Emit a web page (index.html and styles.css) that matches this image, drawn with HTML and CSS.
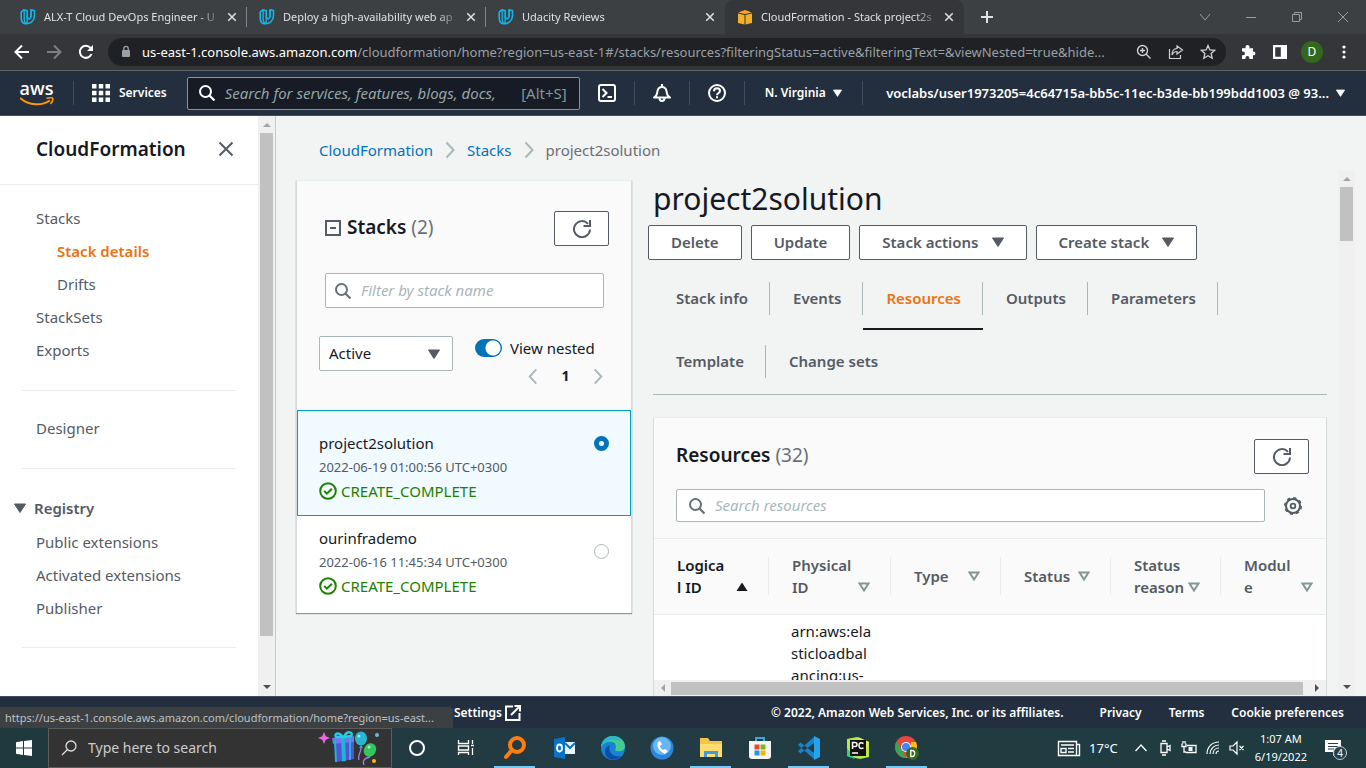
FILE: index.html
```html
<!DOCTYPE html>
<html lang="en">
<head>
<meta charset="utf-8">
<title>CloudFormation - Stack project2solution</title>
<link rel="stylesheet" href="styles.css">
</head>
<body>
<svg class="defs" aria-hidden="true">
  <symbol id="udacity" viewBox="0 0 16 16"><path d="M1.2 3.2v5.3c0 4 2 6.3 5 6.3 4.600 0 8.300-3.300 8.300-8.300V1.600l-3.500-.8v6.800c0 1.500-1.500 2.500-2.700 1.900-.9-.5-1.100-1.300-1.100-2.400V1.600L3.700.9 1.200 3.200z" fill="none" stroke="#12b5ea" stroke-width="1.600"/><path d="M7.200 7v5.500c0 1.500-1 2-2 2M11 1v7M4.200 1.500v8.500c0 2.500 1 4 2.500 4" fill="none" stroke="#12b5ea" stroke-width="1.300"/></symbol>
  <symbol id="cross" viewBox="0 0 16 16"><path d="M3 3l10 10M13 3L3 13" fill="none" stroke="currentColor" stroke-width="2"/></symbol>
  <symbol id="lens" viewBox="0 0 16 16"><circle cx="6.500" cy="6.500" r="5.500" fill="none" stroke="currentColor" stroke-width="2"/><path d="M10.500 10.500l5 5" stroke="currentColor" stroke-width="2.200"/></symbol>
  <symbol id="refresh" viewBox="0 0 18 18"><path d="M17 9.500A8 8 0 1 1 15 3.800" fill="none" stroke="currentColor" stroke-width="2"/><path d="M17 0v6h-6.500" fill="none" stroke="currentColor" stroke-width="2"/></symbol>
  <symbol id="down" viewBox="0 0 12 10"><path d="M.5 1h11L6 9.500z" fill="currentColor" stroke="currentColor" stroke-linejoin="round"/></symbol>
  <symbol id="up" viewBox="0 0 12 10"><path d="M.5 9h11L6 .5z" fill="currentColor"/></symbol>
  <symbol id="sort" viewBox="0 0 12 10"><path d="M1.500 1.500h9L6 8.500z" fill="none" stroke="#879596" stroke-width="2"/></symbol>
  <symbol id="ok" viewBox="0 0 18 18"><circle cx="9" cy="9" r="7.800" fill="none" stroke="currentColor" stroke-width="2"/><path d="M5.200 9l2.700 2.700 5-5" fill="none" stroke="currentColor" stroke-width="2"/></symbol>
  <symbol id="chev" viewBox="0 0 10 18"><path d="M1.500 1.500L8.500 9l-7 7.500" fill="none" stroke="currentColor" stroke-width="2"/></symbol>
  <symbol id="tri" viewBox="0 0 8 4"><path d="M0 4L4 0l4 4z" fill="currentColor"/></symbol>
</svg>

<header class="tabstrip">
  <div class="tab"><svg class="i16"><use href="#udacity"/></svg><span class="tab-title">ALX-T Cloud DevOps Engineer - U</span><button class="bare" aria-label="Close tab"><svg class="i12"><use href="#cross"/></svg></button></div>
  <div class="tab"><svg class="i16"><use href="#udacity"/></svg><span class="tab-title">Deploy a high-availability web ap</span><button class="bare" aria-label="Close tab"><svg class="i12"><use href="#cross"/></svg></button></div>
  <div class="tab last"><svg class="i16"><use href="#udacity"/></svg><span class="tab-title">Udacity Reviews</span><button class="bare" aria-label="Close tab"><svg class="i12"><use href="#cross"/></svg></button></div>
  <div class="tab active"><svg class="i16" viewBox="0 0 16 16"><path d="M1 4.500L7.500 6v9.500L1 14zM15 4.500L8.500 6v9.500L15 14zM1.200 3.500L8 1l6.800 2.500L8 5z" fill="#f5b02a"/><path d="M4 3l4-1.500L12 3 8 4z" fill="#ff9d0a"/></svg><span class="tab-title">CloudFormation - Stack project2s</span><button class="bare" aria-label="Close tab"><svg class="i12"><use href="#cross"/></svg></button></div>
  <button class="bare newtab" aria-label="New tab"><svg class="i12" viewBox="0 0 12 12"><path d="M6 0v12M0 6h12" stroke="currentColor" stroke-width="2"/></svg></button>
  <div class="win">
    <button class="bare" aria-label="Search tabs"><svg class="i12" viewBox="0 0 12 12"><path d="M1 3l5 6 5-6" fill="none" stroke="currentColor"/></svg></button>
    <button class="bare" aria-label="Minimize"><svg class="i12" viewBox="0 0 12 12"><path d="M1 6.500h10" stroke="currentColor"/></svg></button>
    <button class="bare" aria-label="Restore"><svg class="i12" viewBox="0 0 12 12"><path d="M1.500 3.500h7v7h-7zM3.500 3.500v-2h7v7h-2" fill="none" stroke="currentColor"/></svg></button>
    <button class="bare" aria-label="Close"><svg class="i12" viewBox="0 0 12 12"><path d="M1 1l10 10M11 1L1 11" stroke="currentColor"/></svg></button>
  </div>
</header>

<div class="toolbar">
  <button class="bare tool" aria-label="Back"><svg class="i16" viewBox="0 0 16 16"><path d="M15 8H2M8 1.500L1.500 8 8 14.500" fill="none" stroke="#fff" stroke-width="2"/></svg></button>
  <button class="bare tool" aria-label="Forward"><svg class="i16" viewBox="0 0 16 16"><path d="M1 8h13M8 1.500L14.500 8 8 14.500" fill="none" stroke="#7d7f82" stroke-width="2"/></svg></button>
  <button class="bare tool" aria-label="Reload"><svg class="i16" viewBox="0 0 16 16"><path d="M13.500 10A6 6 0 1 1 12.500 4" fill="none" stroke="#fff" stroke-width="2"/><path d="M15 1v6H9z" fill="#fff"/></svg></button>
  <div class="omnibox">
    <svg class="lock" viewBox="0 0 10 14"><rect x="1" y="5" width="8" height="7" rx="1" fill="#9aa0a6"/><path d="M2.800 5V3.500a2.200 2.200 0 0 1 4.400 0V5" fill="none" stroke="#9aa0a6" stroke-width="1.300"/></svg>
    <span class="url"><b>us-east-1.console.aws.amazon.com</b>/cloudformation/home?region=us-east-1#/stacks/resources?filteringStatus=active&amp;filteringText=&amp;viewNested=true&amp;hide...</span>
    <button class="bare tool" aria-label="Zoom"><svg class="i16" viewBox="0 0 16 16"><circle cx="6.500" cy="6.500" r="5" fill="none" stroke="currentColor" stroke-width="1.400"/><path d="M10 10l4.500 4.500M4 6.500h5M6.500 4v5" stroke="currentColor" stroke-width="1.400"/></svg></button>
    <button class="bare tool" aria-label="Share"><svg class="i16" viewBox="0 0 16 16"><path d="M1.500 5v9.500h11V11M9 2l5.500 4L9 10V7.500C6.500 7.500 5 9 4 11c0-4 2-6.300 5-6.500z" fill="none" stroke="currentColor" stroke-width="1.200"/></svg></button>
    <button class="bare tool" aria-label="Bookmark"><svg class="i16" viewBox="0 0 16 16"><path d="M8 1.500l1.900 4.400 4.800.4-3.600 3.200 1.100 4.700L8 11.700l-4.200 2.500 1.100-4.700L1.300 6.300l4.800-.4z" fill="none" stroke="currentColor" stroke-width="1.300"/></svg></button>
  </div>
  <button class="bare tool" aria-label="Extensions"><svg class="i16" viewBox="0 0 16 16"><path d="M13 7.500V4.200H9.500V3a2 2 0 0 0-4 0v1.200H2v3.300h1a1.900 1.900 0 0 1 0 3.800H2v3.700h3.500v-1a1.900 1.900 0 0 1 3.800 0v1H13v-3.700h.5a1.900 1.900 0 0 0 0-3.800z" fill="#fff"/></svg></button>
  <button class="bare tool" aria-label="Side panel"><svg class="i16" viewBox="0 0 16 16"><path d="M1 1h14v14H1zM3.200 3.200v9.600h5.600V3.200z" fill="#fff" fill-rule="evenodd"/></svg></button>
  <button class="bare tool avatar" aria-label="Profile">D</button>
  <button class="bare tool" aria-label="Menu"><svg class="i16" viewBox="0 0 16 16"><circle cx="8" cy="3" r="1.600" fill="#fff"/><circle cx="8" cy="8" r="1.600" fill="#fff"/><circle cx="8" cy="13" r="1.600" fill="#fff"/></svg></button>
</div>

<nav class="aws">
  <a class="logo" href="#" aria-label="AWS"><span class="logo-text">aws</span><svg class="smile" viewBox="0 0 34 9"><path d="M0 1c9 8 22 8 30 2.500" fill="none" stroke="#f90" stroke-width="2"/><path d="M26.500 1.500c3-1 6-.8 6.300 0 .3 1-.5 3.500-2.300 5.500" fill="none" stroke="#f90" stroke-width="1.600"/></svg></a>
  <button class="bare services"><svg class="i18" viewBox="0 0 18 18"><path d="M0 0h4.500v4.500H0zM6.750 0h4.500v4.500h-4.500zM13.500 0H18v4.500h-4.500zM0 6.750h4.500v4.500H0zM6.750 6.750h4.500v4.500h-4.500zM13.500 6.750H18v4.500h-4.500zM0 13.500h4.500V18H0zM6.750 13.500h4.500V18h-4.500zM13.500 13.500H18V18h-4.500z" fill="#fff"/></svg>Services</button>
  <label class="aws-search"><svg class="i16"><use href="#lens"/></svg><input type="text" aria-label="Search AWS" placeholder="Search for services, features, blogs, docs,"><span class="kbd">[Alt+S]</span></label>
  <button class="bare cell" aria-label="CloudShell"><svg class="i18" viewBox="0 0 18 18"><rect x="1" y="1" width="16" height="16" rx="2" fill="none" stroke="#fff" stroke-width="2"/><path d="M4.500 5l4 4-4 4M9.500 13H14" fill="none" stroke="#fff" stroke-width="2"/></svg></button>
  <button class="bare cell" aria-label="Notifications"><svg class="i18" viewBox="0 0 18 18"><path d="M9 0v3M1 13.500c3.500-2 3-4 3.500-6.500.5-2.500 2-4 4.500-4s4 1.500 4.500 4c.5 2.500 0 4.500 3.500 6.500zM6.500 14c0 4 5 4 5 0" fill="none" stroke="#fff" stroke-width="2" stroke-linejoin="round"/></svg></button>
  <button class="bare cell" aria-label="Help"><svg class="i18" viewBox="0 0 18 18"><circle cx="9" cy="9" r="8" fill="none" stroke="#fff" stroke-width="2"/><path d="M6 7.200C6 3.300 12 3.500 12 7c0 2-3 2-3 4.200M9 12.200v2" fill="none" stroke="#fff" stroke-width="2"/></svg></button>
  <button class="bare cell region">N. Virginia<svg class="caret"><use href="#down"/></svg></button>
  <button class="bare user"><span>voclabs/user1973205=4c64715a-bb5c-11ec-b3de-bb199bdd1003 @ 93...</span><svg class="caret"><use href="#down"/></svg></button>
</nav>

<div class="app">
  <aside class="side">
    <div class="side-main">
      <div class="side-head"><h2>CloudFormation</h2><button class="bare" aria-label="Close navigation"><svg class="i16" viewBox="0 0 16 16"><path d="M1.500 1.500l13 13M14.500 1.500l-13 13" stroke="currentColor" stroke-width="2"/></svg></button></div>
      <div class="side-body">
        <ul>
          <li><a href="#">Stacks</a></li>
          <li class="sub"><a class="on" href="#">Stack details</a></li>
          <li class="sub"><a href="#">Drifts</a></li>
          <li><a href="#">StackSets</a></li>
          <li><a href="#">Exports</a></li>
        </ul>
        <ul><li><a href="#">Designer</a></li></ul>
        <ul>
          <li class="group"><button class="bare"><svg class="caret12"><use href="#down"/></svg>Registry</button></li>
          <li><a href="#">Public extensions</a></li>
          <li><a href="#">Activated extensions</a></li>
          <li><a href="#">Publisher</a></li>
        </ul>
      </div>
    </div>
    <div class="vbar"><svg class="arr dim"><use href="#tri"/></svg><div class="track"><div class="thumb side-thumb"></div></div><svg class="arr flip"><use href="#tri"/></svg></div>
  </aside>

  <main class="content">
    <nav class="crumbs"><a href="#">CloudFormation</a><svg><use href="#chev"/></svg><a href="#">Stacks</a><svg><use href="#chev"/></svg><span>project2solution</span></nav>
    <div class="split">
      <section class="stacks">
        <div class="stacks-top">
          <div class="row title-row"><svg class="i16 minus" viewBox="0 0 16 16"><rect x="1" y="1" width="14" height="14" fill="none" stroke="currentColor" stroke-width="2"/><path d="M5 8h6" stroke="currentColor" stroke-width="2"/></svg><h2>Stacks <span>(2)</span></h2><button class="btn icon" aria-label="Refresh stacks"><svg class="i18"><use href="#refresh"/></svg></button></div>
          <label class="field filter"><svg class="i16"><use href="#lens"/></svg><input type="text" aria-label="Filter by stack name" placeholder="Filter by stack name"></label>
          <div class="row controls">
            <div class="select"><select aria-label="Status"><option>Active</option></select><svg class="caret12"><use href="#down"/></svg></div>
            <div class="nested">
              <label class="toggle"><input type="checkbox" checked>View nested</label>
              <div class="pager"><button class="bare" aria-label="Previous"><svg class="flip"><use href="#chev"/></svg></button><b>1</b><button class="bare" aria-label="Next"><svg><use href="#chev"/></svg></button></div>
            </div>
          </div>
        </div>
        <label class="stack selected"><span class="stack-text"><span>project2solution</span><span class="date">2022-06-19 01:00:56 UTC+0300</span><span class="status"><svg class="i18"><use href="#ok"/></svg>CREATE_COMPLETE</span></span><input type="radio" name="stack" checked></label>
        <label class="stack"><span class="stack-text"><span>ourinfrademo</span><span class="date">2022-06-16 11:45:34 UTC+0300</span><span class="status"><svg class="i18"><use href="#ok"/></svg>CREATE_COMPLETE</span></span><input type="radio" name="stack"></label>
      </section>

      <div class="detail">
        <h1>project2solution</h1>
        <div class="actions"><button class="btn">Delete</button><button class="btn">Update</button><button class="btn">Stack actions<svg class="caret12"><use href="#down"/></svg></button><button class="btn">Create stack<svg class="caret12"><use href="#down"/></svg></button></div>
        <nav class="tabs"><a href="#"><span>Stack info</span></a><a href="#"><span>Events</span></a><a class="on" href="#"><span>Resources</span></a><a href="#"><span>Outputs</span></a><a href="#"><span>Parameters</span></a><a href="#"><span>Template</span></a><a href="#" class="end"><span>Change sets</span></a></nav>
        <section class="panel">
          <div class="panel-top">
            <div class="row title-row2"><h2>Resources <span>(32)</span></h2><button class="btn icon" aria-label="Refresh resources"><svg class="i18"><use href="#refresh"/></svg></button></div>
            <div class="row search-row"><label class="field"><svg class="i16"><use href="#lens"/></svg><input type="text" aria-label="Search resources" placeholder="Search resources"></label><button class="bare gear" aria-label="Settings"><svg class="i18" viewBox="0 0 18 18"><circle cx="9" cy="9" r="7" fill="none" stroke="currentColor" stroke-width="2"/><circle cx="9" cy="9" r="8.200" fill="none" stroke="currentColor" stroke-width="1.600" stroke-dasharray="3.200 3.240"/><circle cx="9" cy="9" r="2.300" fill="none" stroke="currentColor" stroke-width="1.800"/></svg></button></div>
          </div>
          <div class="table-wrap">
            <table>
              <thead><tr>
                <th class="sorted c1"><div><span>Logica<br>l ID</span><svg class="caret12"><use href="#up"/></svg></div></th>
                <th class="c2"><div><span>Physical<br>ID</span><svg class="caret12"><use href="#sort"/></svg></div></th>
                <th class="c3 one"><div><span>Type</span><svg class="caret12"><use href="#sort"/></svg></div></th>
                <th class="c3 one"><div><span>Status</span><svg class="caret12"><use href="#sort"/></svg></div></th>
                <th class="c3"><div><span>Status<br>reason</span><svg class="caret12"><use href="#sort"/></svg></div></th>
                <th><div><span>Modul<br>e</span><svg class="caret12"><use href="#sort"/></svg></div></th>
              </tr></thead>
              <tbody><tr><td></td><td>arn:aws:ela<br>sticloadbal<br>ancing:us-</td><td></td><td></td><td></td><td></td></tr></tbody>
            </table>
          </div>
          <div class="hbar"><svg class="arr left"><use href="#tri"/></svg><div class="hthumb"></div><svg class="arr right"><use href="#tri"/></svg></div>
        </section>
      </div>
      <div class="vbar"><svg class="arr dim"><use href="#tri"/></svg><div class="track"><div class="thumb page-thumb"></div></div><svg class="arr flip"><use href="#tri"/></svg></div>
    </div>
  </main>
</div>

<footer class="foot">
  <div class="hint">https://us-east-1.console.aws.amazon.com/cloudformation/home?region=us-east...</div>
  <a href="#" class="settings">Settings<svg class="i16" viewBox="0 0 16 16"><path d="M8 1.500H1v13.500h13.500V8M9.500 1H15v5.500M15 1L6 10" fill="none" stroke="#fff" stroke-width="2"/></svg></a>
  <span class="copy">© 2022, Amazon Web Services, Inc. or its affiliates.</span><a href="#">Privacy</a><a href="#">Terms</a><a href="#">Cookie preferences</a>
</footer>

<div class="taskbar">
  <button class="bare start" aria-label="Start"><svg class="i16" viewBox="0 0 16 16"><path d="M0 2.200L7 1v6.500H0zM8 .9L16 0v7.500H8zM0 8.500h7V15L0 13.800zM8 8.500h8V16l-8-1.100z" fill="#fff"/></svg></button>
  <label class="task-search"><svg class="i16" viewBox="0 0 16 16"><circle cx="10" cy="6" r="5" fill="none" stroke="#ddd" stroke-width="1.300"/><path d="M6.500 9.500L1 15" stroke="#ddd" stroke-width="1.300"/></svg><input type="text" aria-label="Windows search" placeholder="Type here to search">
    <svg class="gift" viewBox="0 0 70 34"><path d="M7 1l1.800 4.200L13 7 8.800 8.800 7 13 5.200 8.800 1 7l4.200-1.800z" fill="#e868e0"/><path d="M17 10l20-2v20l-18 3z" fill="#5a4fd8"/><path d="M15 7l22-2v6l-21 2z" fill="#7a70f5"/><path d="M24 6h4l1 24-4 .6z" fill="#18b8d0"/><path d="M18 9l1 22M33 7v22" stroke="#18b8d0" stroke-width="2"/><path d="M26 6c-5-6-9-3-7 0zM27 6c3-7 10-5 7-1z" fill="none" stroke="#25cde0" stroke-width="2.500"/><path d="M44 15c1 6-4 9-2 14M53 26c-5 1-8 3-6 8" fill="none" stroke="#a87cf0" stroke-width="1.300"/><ellipse cx="44" cy="7.500" rx="6" ry="7" fill="#28b5cf"/><path d="M44 14l-2 3h4z" fill="#28b5cf"/><ellipse cx="53" cy="19" rx="6" ry="7" transform="rotate(30 53 19)" fill="#34c55f"/><circle cx="42" cy="5" r="1.500" fill="#9beaf5"/><circle cx="52" cy="16" r="1.500" fill="#a5f0b5"/><circle cx="60" cy="4" r="2" fill="#6bd"/><circle cx="57" cy="30" r="2" fill="#fdb813"/></svg>
  </label>
  <div class="apps">
    <button class="bare" aria-label="Cortana"><svg class="i24" viewBox="0 0 24 24"><circle cx="12" cy="12" r="7" fill="none" stroke="#fff" stroke-width="2"/></svg></button>
    <button class="bare" aria-label="Task view"><svg class="i24" viewBox="0 0 24 24"><path d="M4.500 4v3.500h10V4M4.500 19v-2.500h10V19M4.500 10h10v4h-10zM18.500 4v4M18.500 12v7M17 9.500h3" fill="none" stroke="#fff" stroke-width="1.300"/></svg></button>
    <button class="bare run" aria-label="Search app"><svg class="i24" viewBox="0 0 24 24"><circle cx="14" cy="9" r="7" fill="none" stroke="#ff7d0a" stroke-width="4"/><path d="M9 14l-6 7" stroke="#ff7d0a" stroke-width="4" stroke-linecap="round"/></svg></button>
    <button class="bare" aria-label="Outlook"><svg class="i24" viewBox="0 0 24 24"><path d="M2 3l11-2v22L2 21z" fill="#0872c9"/><path d="M13 6h10v12H13z" fill="#e9f3fc"/><path d="M13 7l5 5 5-5" stroke="#0872c9" stroke-width="2" fill="none"/><ellipse cx="7.500" cy="12" rx="2.500" ry="3.500" stroke="#fff" stroke-width="1.800" fill="none"/></svg></button>
    <button class="bare" aria-label="Edge"><svg class="i24" viewBox="0 0 24 24"><circle cx="12" cy="12" r="12" fill="#1683d4"/><path d="M0 11C1 3 7 0 12 0c7 0 12 5 12 10 0 5-5 6-9 5-2-1 0-2 0-4 0-7-11-7-15 0z" fill="#45ca91"/><path d="M0 11C1 3 7 0 13 0c4 1 6 3 7 6-8-5-15-2-20 5z" fill="#27b7d2"/><path d="M9 9c-3 6 3 13 11 11-6 7-17 3-16-5 0-3 2-5 5-6z" fill="#0b4fa4"/></svg></button>
    <button class="bare" aria-label="Phone"><svg class="i24" viewBox="0 0 24 24"><circle cx="12" cy="12" r="11.500" fill="#2a87dd"/><circle cx="12" cy="10" r="9" fill="#67b7f4"/><path d="M8 6c-2 4 1 9 7 12l3-3-3-2-2 1c-2-1-3-3-3-4l2-2-2-3z" fill="#fff"/></svg></button>
    <button class="bare run" aria-label="File Explorer"><svg class="i24" viewBox="0 0 24 24"><path d="M1 2h8l2 3h12v16H1z" fill="#f3c64a"/><path d="M1 8h22v13H1z" fill="#ffdc70"/><path d="M5 21v-6h14v6h-3v-3H8v3z" fill="#3e9be0"/></svg></button>
    <button class="bare" aria-label="Store"><svg class="i24" viewBox="0 0 24 24"><path d="M1 5h22v15q0 3-3 3H4q-3 0-3-3z" fill="#f5f5f5"/><path d="M8 5V2h8v3" fill="none" stroke="#35a6de" stroke-width="2"/><path d="M6.500 8.500h5v5h-5z" fill="#e84b2c"/><path d="M12.500 8.500h5v5h-5z" fill="#76b82a"/><path d="M6.500 14.500h5v5h-5z" fill="#1c9be0"/><path d="M12.500 14.500h5v5h-5z" fill="#f5b400"/></svg></button>
    <button class="bare run" aria-label="VS Code"><svg class="i24" viewBox="0 0 24 24"><path d="M17 0l6 3v18l-6 3z" fill="#27a3ec"/><path d="M17 1L1 15l2.500 2.500L17 7zM17 23L1 9l2.500-2.500L17 17z" fill="#1785cb"/></svg></button>
    <button class="bare" aria-label="PyCharm"><svg class="i24" viewBox="0 0 24 24"><path d="M1 3l10-2 12 5v15l-9 2-13-3z" fill="#b9e84a"/><path d="M12 1l11 5-3 8z" fill="#e8ef55"/><path d="M1 12l8 11-8-3z" fill="#21d789"/><path d="M4 4h16v16H4z" fill="#111"/><path d="M6.500 13V6.500H9q2 0 2 2t-2 2H6.500M17.500 7.500q-4.500-2-4.500 2t4.500 2.500M6 17h6" fill="none" stroke="#fff" stroke-width="1.500"/></svg></button>
    <button class="bare run" aria-label="Chrome"><svg class="i24" viewBox="0 0 24 24"><circle cx="11" cy="11" r="11" fill="#e8453c"/><path d="M1.500 5.500L6 13l5 9C2 22-2 12 1.500 5.500z" fill="#34a853"/><path d="M11 22l5-8.500L16 6h5c3 7-2 16-10 16z" fill="#fbc116"/><circle cx="11" cy="11" r="5" fill="#fff"/><circle cx="11" cy="11" r="4" fill="#4285f4"/><circle cx="17.500" cy="17.500" r="6.500" fill="#33691e"/><path d="M15.800 14.500v6h1.400q2.500 0 2.500-3t-2.500-3z" fill="none" stroke="#fff" stroke-width="1.300"/></svg></button>
  </div>
  <div class="tray">
    <svg class="i24" viewBox="0 0 24 24"><path d="M1.500 5.500h18v14h-18zM19.500 8.500h3v11h-5M4 9h13M4 12.500h5v4H4zM11 12.500h6M11 16h6" fill="none" stroke="#fff" stroke-width="1.400"/></svg><span class="temp">17°C</span>
    <svg class="i16" viewBox="0 0 16 16"><path d="M2.500 11L8 5l5.500 6" fill="none" stroke="#fff" stroke-width="1.300"/></svg>
    <svg class="i16" viewBox="0 0 16 16"><path d="M4 3.500h6v9H4zM10 7l3-1.500v5L10 9M5 1h4M5 15h4" fill="none" stroke="#fff" stroke-width="1.300"/></svg>
    <svg class="i16" viewBox="0 0 16 16"><path d="M6 5.500h9v7H5M1 3.500v3h4v-3M2 3.500V1M4 3.500V1M3 6.500V12h2" fill="none" stroke="#fff" stroke-width="1.300"/><path d="M7.500 7h4v4h-4z" fill="#fff"/></svg>
    <svg class="i16" viewBox="0 0 16 16"><path d="M2 14C2 7 7 2 14 2M5 14c0-5 4-9 9-9M8 14c0-3.500 2.500-6 6-6M11 14c0-2 1-3 3-3" fill="none" stroke="#fff" stroke-width="1.200"/></svg>
    <svg class="i16" viewBox="0 0 16 16"><path d="M1 6h3l4-4v12l-4-4H1zM10.500 6l4 4M14.500 6l-4 4" fill="none" stroke="#fff" stroke-width="1.200"/></svg>
    <div class="clock">1:07 AM<br>6/19/2022</div>
    <div class="note"><svg class="i16" viewBox="0 0 16 16"><path d="M0 0h16v12h-4l-4 4v-4H0z" fill="#fff"/><path d="M3 3.500h10M3 6.500h10M3 9h6" stroke="#24404a"/></svg><span>4</span></div>
  </div>
</div>
</body>
</html>
```
FILE: styles.css
```css
* { box-sizing: border-box; }
body { margin: 0; height: 100vh; display: flex; flex-direction: column; overflow: hidden; font: 15px/22px "Noto Sans", "Open Sans", sans-serif; color: #16191f; background: #f2f3f3; }
h1, h2, ul { margin: 0; padding: 0; font-weight: 400; }
ul { list-style: none; }
a { text-decoration: none; color: inherit; }
input, select, button { font: inherit; color: inherit; }
svg { flex: none; }
.defs { display: none; }
.bare { display: flex; align-items: center; justify-content: center; border: 0; padding: 0; background: none; flex: none; }
.i12 { width: 12px; height: 12px; }
.i16 { width: 16px; height: 16px; }
.i18 { width: 18px; height: 18px; }
.i24 { width: 24px; height: 24px; }
.caret { width: 9px; height: 8px; }
.caret12 { width: 12px; height: 10px; }
.row { display: flex; align-items: center; }

.tabstrip { display: flex; align-items: center; height: 34px; flex: none; padding-left: 8px; background: #3c4043; color: #dfe1e5; font-size: 11px; }
.tab { display: flex; align-items: center; gap: 8px; width: 239px; height: 34px; padding: 0 9px 0 12px; position: relative; }
.tab:not(.last):not(.active)::after { content: ""; position: absolute; right: 0; top: 7px; width: 1px; height: 20px; background: #80868b; }
.tab.active { background: #35363a; border-radius: 8px 8px 0 0; }
.tab-title { flex: 1; white-space: nowrap; mask-image: linear-gradient(to right, #000 88%, rgba(0, 0, 0, .2)); }
.newtab { margin-left: 17px; }
.win { margin-left: auto; display: flex; color: #9a9da0; }
.win .bare { width: 46px; height: 28px; }

.toolbar { display: flex; align-items: center; height: 37px; flex: none; padding: 0 6px; background: #35363a; border-bottom: 1px solid #5f6368; color: #d0d2d5; }
.tool { width: 32px; height: 28px; }
.omnibox { flex: 1; display: flex; align-items: center; min-width: 0; height: 28px; margin: 0 6px; padding: 0 2px 0 13px; border-radius: 14px; background: #202124; }
.lock { width: 10px; height: 14px; margin-right: 11px; }
.url { flex: 1; overflow: hidden; white-space: nowrap; font-size: 13px; color: #9aa0a6; }
.url b { font-weight: 400; color: #fff; }
.avatar { width: 22px; height: 22px; margin: 0 5px; border-radius: 50%; background: #33691e; color: #fff; font-size: 12px; }

.aws { display: flex; align-items: center; height: 45px; flex: none; background: #232f3e; border-bottom: 1px solid #414d5c; color: #fff; font-size: 12px; font-weight: 600; }
.logo { display: flex; flex-direction: column; align-items: center; width: 74px; height: 24px; border-right: 1px solid #414d5c; }
.logo-text { font: 600 18px/14px "Open Sans", sans-serif; }
.smile { width: 34px; height: 9px; margin-top: 2px; }
.services { gap: 9px; margin: 0 20px 0 18px; }
.aws-search { display: flex; align-items: center; gap: 10px; width: 393px; height: 33px; padding: 0 12px 0 11px; border: 1px solid #879596; border-radius: 2px; background: #161b25; }
.aws-search input { flex: 1; min-width: 0; border: 0; padding: 0; background: none; font-size: 15px; font-weight: 400; }
.aws-search input::placeholder { font-style: italic; color: #95a5a6; }
.kbd { font-size: 15px; font-weight: 400; color: #879596; }
.cell { width: 55px; height: 24px; border-right: 1px solid #414d5c; }
.region { width: 118px; gap: 7px; }
.user { flex: 1; gap: 7px; justify-content: flex-end; padding-right: 21px; font-size: 13px; }

.app { flex: 1; display: flex; min-height: 0; }
.side { display: flex; flex: none; width: 276px; background: #fff; border-right: 1px solid #c5cbcb; color: #545b64; }
.side-main { flex: 1; overflow: hidden; }
.side-head { display: flex; align-items: center; justify-content: space-between; height: 69px; padding: 0 24px 2px 36px; border-bottom: 1px solid #eaeded; }
.side-body { padding: 17px 22px 0; }
.side-body ul { border-bottom: 1px solid #eaeded; padding-bottom: 23px; margin-bottom: 21px; }
.side-body ul:last-child { padding-bottom: 22px; }
.side-body li { line-height: 33px; height: 33px; padding-left: 14px; white-space: nowrap; }
.side-body .sub { padding-left: 35px; }
.side-body .on { color: #ec7211; font-weight: 600; }
.side-body .group { height: 36px; padding: 0; margin-left: -8px; }
.group .bare { height: 36px; gap: 8px; font-weight: 600; }
.vbar { display: flex; flex-direction: column; align-items: center; flex: none; width: 17px; padding: 7px 0; background: #f0f0f0; }
.arr { width: 8px; height: 4px; color: #505050; }
.dim { color: #a3a3a3; }
.flip { transform: rotate(180deg); }
.track { flex: 1; width: 13px; padding: 6px 0 5px; }
.thumb { background: #c1c1c1; }
.side-thumb { height: 92%; }
.page-thumb { height: 54px; }

.content { flex: 1; display: flex; flex-direction: column; min-width: 0; padding: 0 11px 0 20px; }
.crumbs { display: flex; align-items: center; gap: 12px; height: 54px; padding: 13px 23px 0; color: #687078; flex: none; }
.crumbs a { color: #0073bb; }
.crumbs svg { width: 10px; height: 18px; color: #aab7b8; }
.split { flex: 1; display: flex; min-height: 0; align-items: flex-start; }
.split > .vbar { align-self: stretch; margin-left: 11px; }
.stacks { width: 336px; flex: none; margin-top: 10px; background: #fff; border: 1px solid #d5dbdb; border-top-color: #eaeded; box-shadow: 0 1px 1px #879596; border-bottom: 0; }
.stacks-top { padding: 30px 22px 23px; background: #fafafa; }
.title-row, .title-row2 { align-items: flex-start; }
.title-row { gap: 6px; padding-left: 6px; color: #545b64; }
.minus { margin-top: 9px; }
h2 { font-size: 19px; line-height: 32px; font-weight: 600; color: #16191f; }
h2 span { font-weight: 400; color: #687078; }
.btn { display: flex; align-items: center; height: 35px; padding: 0 22px 2px; border: 1px solid #545b64; border-radius: 2px; background: #fff; color: #545b64; font-weight: 600; white-space: nowrap; }
.btn .caret12 { margin-left: 13px; margin-top: 1px; }
.btn.icon { width: 55px; padding: 0; justify-content: center; margin-left: auto; }
.field { display: flex; align-items: center; gap: 10px; height: 35px; padding: 0 9px; border: 1px solid #aab7b8; border-radius: 2px; background: #fff; color: #687078; }
.field input { flex: 1; min-width: 0; border: 0; padding: 0 0 2px; background: none; }
.field input::placeholder { font-style: italic; color: #aab7b8; }
.filter { margin: 27px 5px 28px 6px; }
.controls { justify-content: space-between; align-items: flex-start; }
.select { position: relative; width: 134px; }
.select select { width: 100%; height: 35px; padding: 0 9px 2px; border: 1px solid #aab7b8; border-radius: 2px; appearance: none; background: #fff; color: #16191f; }
.select svg { position: absolute; right: 13px; top: 13px; color: #545b64; pointer-events: none; }
.nested { display: flex; flex-direction: column; gap: 5px; width: 134px; }
.toggle { display: flex; align-items: center; gap: 8px; height: 24px; white-space: nowrap; }
.toggle input { appearance: none; flex: none; width: 27px; height: 18px; margin: 0; border-radius: 9px; background: radial-gradient(circle at 18px 9px, #fff 7px, #0073bb 8px); }
.pager { display: flex; justify-content: space-between; align-items: center; height: 22px; padding: 0 6px 0 53px; color: #16191f; font-size: 14px; }
.pager svg { width: 10px; height: 17px; color: #aab7b8; }
.stack { display: flex; justify-content: space-between; align-items: center; padding: 10px 22px 15px; }
.stack.selected { align-items: flex-start; padding: 20px 21px 12px; border: 1px solid #00a1c9; background: #f1faff; }
.stack-text > span { display: flex; align-items: center; height: 24px; }
.stack .date { font-size: 13px; color: #545b64; }
.stack .status { gap: 4px; color: #1d8102; }
.stack input { appearance: none; width: 15px; height: 15px; margin: 0; border: 1px solid #aab7b8; border-radius: 50%; background: #fff; }
.stack:not(.selected) input { margin-bottom: 21px; }
.stack input:checked { margin-top: 5px; border: 5px solid #0073bb; }

.detail { flex: 1; min-width: 0; height: 100%; display: flex; flex-direction: column; padding-left: 21px; overflow: hidden; }
.detail h1 { margin-top: 9px; font-size: 30px; line-height: 40px; }
.actions { display: flex; gap: 9px; flex: none; margin: 6px 0 7px -5px; }
.tabs { display: flex; flex-wrap: wrap; flex: none; color: #545b64; font-weight: 600; border-bottom: 1px solid #aab7b8; padding-bottom: 1px; }
.tabs a { height: 63px; padding-top: 15px; border-bottom: 2px solid transparent; }
.tabs span { display: block; padding: 0 21px 0 23px; line-height: 33px; border-right: 1px solid #aab7b8; }
.tabs .on { color: #ec7211; border-color: #16191f; }
.tabs .end span { border: 0; }
.panel { flex: 1; display: flex; flex-direction: column; min-height: 0; margin-top: 22px; background: #fff; border: 1px solid #d5dbdb; border-top-color: #eaeded; border-bottom: 0; }
.panel-top { flex: none; padding: 21px 17px 16px 22px; background: #fafafa; border-bottom: 1px solid #eaeded; }
.search-row { margin-top: 15px; }
.search-row .field { flex: 1; height: 33px; padding-left: 12px; }
.gear { width: 44px; padding-left: 12px; color: #545b64; }
.table-wrap { flex: 1; min-height: 0; overflow: hidden; }
table { width: 101%; table-layout: fixed; border-collapse: collapse; }
.c1 { width: 115px; }
.c2 { width: 122px; }
.c3 { width: 110px; }
th { height: 75px; padding: 0; background: #fafafa; border-bottom: 1px solid #eaeded; color: #545b64; text-align: left; font-weight: 600; }
th div { position: relative; display: flex; align-items: center; height: 38px; padding-left: 23px; border-right: 1px solid #eaeded; }
th:last-child div { border: 0; }
th svg { position: absolute; right: 20px; bottom: 3px; }
th.one svg { bottom: 14px; }
th.sorted { color: #16191f; }
td { padding: 5px 0 0 22px; vertical-align: top; line-height: 22px; white-space: nowrap; }
.hbar { display: flex; align-items: center; flex: none; height: 16px; padding: 0 5px; gap: 4px; background: #f0f0f0; }
.hthumb { flex: 1; height: 13px; margin-right: 6px; background: #c1c1c1; }
.left { transform: rotate(-90deg); color: #a3a3a3; }
.right { transform: rotate(90deg); }

.foot { position: relative; display: flex; align-items: flex-start; gap: 27px; height: 32px; flex: none; padding: 6px 22px 0 454px; background: #232f3e; border-top: 1px solid #414d5c; color: #fff; font-size: 12px; font-weight: 600; line-height: 20px; white-space: nowrap; }
.settings { display: flex; align-items: center; gap: 3px; }
.copy { margin-left: auto; margin-right: 9px; }
.hint { position: absolute; left: 0; bottom: 0; width: 453px; height: 21px; padding: 0 5px; border-radius: 0 4px 0 0; background: #3c4043; color: #bdc1c6; font-size: 11px; font-weight: 400; line-height: 21px; overflow: hidden; }
.taskbar { display: flex; align-items: center; height: 40px; flex: none; background: linear-gradient(90deg, #20393f, #233b44 50%, #1f3b3f); color: #fff; }
.start { width: 48px; height: 40px; }
.task-search { display: flex; align-items: center; gap: 11px; width: 344px; height: 40px; padding: 0 4px 0 12px; border: 1px solid #5d5d5d; background: #333; }
.task-search input { flex: 1; min-width: 0; border: 0; padding: 0; background: none; font-size: 14px; }
.task-search input::placeholder { color: #ccc; }
.gift { width: 70px; height: 34px; }
.apps { display: flex; }
.apps .bare { width: 49px; height: 40px; border: solid transparent; border-width: 2px 0; }
.apps .run { border-image: linear-gradient(90deg, transparent 4px, #76c8f5 4px, #76c8f5 45px, transparent 45px) 0 0 2 0; border-bottom-color: #76c8f5; }
.tray { display: flex; align-items: center; gap: 8px; margin-left: auto; padding-right: 25px; font-size: 12px; }
.temp { font-size: 13px; margin-right: 7px; }
.clock { margin: 0 10px 0 2px; text-align: center; font-size: 11px; line-height: 18px; }
.note { position: relative; }
.note svg { display: block; }
.note span { position: absolute; left: 8px; top: 6px; width: 14px; height: 14px; border: 1px solid #ccc; border-radius: 50%; background: #24404a; font-size: 10px; line-height: 12px; text-align: center; }
```
